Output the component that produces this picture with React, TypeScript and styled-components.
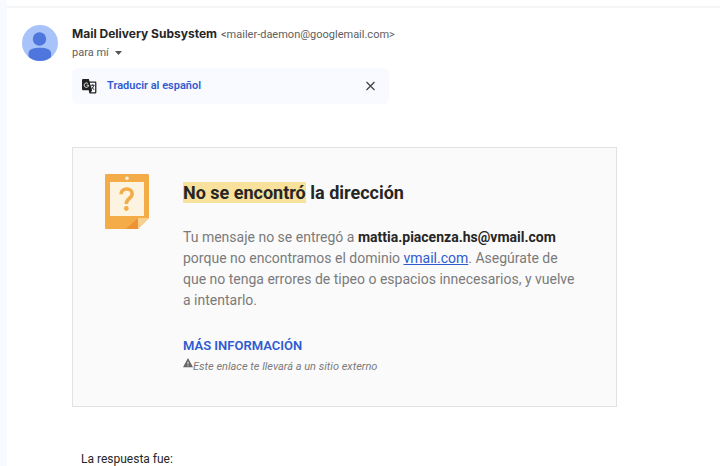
import React from "react";
import styled, { createGlobalStyle } from "styled-components";

const GlobalStyle = createGlobalStyle`
  *, *::before, *::after { box-sizing: border-box; }
  body {
    margin: 0;
    background: #fff;
    color: #262626;
    font-family: Roboto, "Liberation Sans", sans-serif;
  }
`;

const Page = styled.div`
  display: flex;
  min-height: 100vh;
  background: #f8faff;
  padding-left: 7px;
`;

const Pane = styled.main`
  flex: 1;
  min-width: 0;
  background: #fff;
  padding-top: 6px;
`;

const Message = styled.article`
  display: grid;
  grid-template-columns: 36px minmax(0, 1fr);
  column-gap: 14px;
  padding: 17px 16px 0 15px;
  border-top: 2px solid #f5f6f8;
`;

const Avatar = styled.svg`
  display: block;
  width: 36px;
  height: 36px;
`;

const Content = styled.div`
  min-width: 0;
`;

const SenderLine = styled.div`
  display: flex;
  align-items: baseline;
  gap: 4px;
  line-height: 18px;
`;

const SenderName = styled.h3`
  margin: 0;
  font-family: Inter, sans-serif;
  font-size: 12px;
  font-weight: 700;
`;

const SenderAddress = styled.span`
  color: #5e5e5e;
  font-size: 11px;
`;

const RecipientButton = styled.button`
  display: flex;
  align-items: center;
  gap: 6px;
  padding: 0;
  border: 0;
  background: none;
  color: #5e5e5e;
  font-family: inherit;
  font-size: 11px;
  line-height: 18px;
`;

const TranslateBar = styled.div`
  display: flex;
  align-items: center;
  justify-content: space-between;
  max-width: 317px;
  height: 36px;
  margin-top: 6px;
  padding: 0 13px 0 10px;
  border-radius: 6px;
  background: #f8faff;
`;

const TranslateButton = styled.button`
  display: flex;
  align-items: center;
  gap: 10px;
  padding: 0;
  border: 0;
  background: none;
  color: #2f5bd0;
  font-family: inherit;
  font-size: 11px;
  font-weight: 600;
  line-height: 16px;
`;

const CloseButton = styled.button`
  display: flex;
  padding: 0;
  border: 0;
  background: none;
  color: #444;
`;

const Notice = styled.section`
  display: flex;
  gap: 34px;
  max-width: 545px;
  margin-top: 43px;
  padding: 26px 32px 30px;
  border: 1px solid #e2e2e2;
  background: #fafafa;
`;

const NoteIcon = styled.svg`
  flex: none;
  width: 44px;
  height: 55px;
`;

const NoticeBody = styled.div`
  min-width: 0;
`;

const NoticeTitle = styled.h2`
  margin: 8px 0 24px;
  font-size: 18px;
  font-weight: 700;
  line-height: 21px;
`;

const Highlight = styled.mark`
  background: #f8e19a;
  color: inherit;
`;

const Explanation = styled.p`
  margin: 0 0 26px;
  color: #7a7a7a;
  font-size: 14px;
  line-height: 21px;

  strong { color: #262626; font-weight: 700; }
  a { color: #2f5bd0; }
`;

const MoreLink = styled.a`
  display: block;
  color: #2f5bd0;
  font-size: 13px;
  font-weight: 600;
  line-height: 18px;
  text-decoration: none;
`;

const ExternalNote = styled.small`
  display: flex;
  align-items: flex-start;
  margin-top: 3px;
  color: #7a7a7a;
  font-size: 11px;
  font-style: italic;
  line-height: 18px;
`;

const WarningIcon = styled.svg`
  flex: none;
  width: 10px;
  height: 11px;
`;

const Response = styled.p`
  margin: 44px 0 0 9px;
  font-size: 12px;
  line-height: 16px;
`;

export default function App() {
  return (
    <>
      <GlobalStyle />
      <Page>
        <Pane>
          <Message>
            <Avatar viewBox="0 0 36 36" aria-hidden="true">
              <defs>
                <clipPath id="avatar-clip"><circle cx="18" cy="18" r="18" /></clipPath>
              </defs>
              <g clipPath="url(#avatar-clip)">
                <rect width="36" height="36" fill="#a8c3fa" />
                <circle cx="17.5" cy="14" r="6.7" fill="#4f76dc" />
                <path d="M6.500 36v-7.500c0-4.200 5-5.800 11.300-5.800s11.300 1.600 11.300 5.800V36z" fill="#4f76dc" />
              </g>
            </Avatar>
            <Content>
              <SenderLine>
                <SenderName>Mail Delivery Subsystem</SenderName>
                <SenderAddress>&lt;mailer-daemon@googlemail.com&gt;</SenderAddress>
              </SenderLine>
              <RecipientButton type="button">
                para mí
                <svg width="7" height="4" viewBox="0 0 7 4" aria-hidden="true">
                  <path d="M0 0h7L3.500 4z" fill="#555" />
                </svg>
              </RecipientButton>
              <TranslateBar>
                <TranslateButton type="button">
                  <svg width="15" height="15" viewBox="0 0 24 24" aria-hidden="true">
                    <path d="M11 4h10c1.100 0 2 .9 2 2v15c0 1.100-.9 2-2 2h-9l-1-3z" fill="#222" />
                    <path d="M12 6h9v15h-7l2-2.500z" fill="#f8faff" />
                    <path d="M2 0h9l4.500 18H2c-1.100 0-2-.9-2-2V2c0-1.100.9-2 2-2zM11 18h5l-3 4z" fill="#222" />
                    <path d="M9.500 7.300A3.600 3.600 0 1 0 10.600 10H7.300" fill="none" stroke="#f8faff" strokeWidth="1.400" />
                    <path d="M14 10h6M17 8.500v1.500M19 10c-.6 2.500-2 4.500-4 6M15.500 12.500l4 5" fill="none" stroke="#222" strokeWidth="1.500" />
                  </svg>
                  Traducir al español
                </TranslateButton>
                <CloseButton type="button" aria-label="Cerrar">
                  <svg width="11" height="10" viewBox="0 0 11 10" aria-hidden="true">
                    <path d="M1.500 1l8 8M9.500 1l-8 8" stroke="currentColor" strokeWidth="1.300" />
                  </svg>
                </CloseButton>
              </TranslateBar>
              <Notice>
                <NoteIcon viewBox="0 0 44 55" aria-hidden="true">
                  <path d="M1 0h42a1 1 0 0 1 1 1v43L33 55H1a1 1 0 0 1-1-1V1a1 1 0 0 1 1-1z" fill="#f3ac48" />
                  <rect x="5" y="8" width="34" height="34" fill="#fdf3e1" />
                  <circle cx="22" cy="4.200" r="1.800" fill="#fdf3e1" />
                  <path d="M33 44v11H21z" fill="#ee9235" />
                  <path d="M33 44h11L33 55z" fill="#f8d08e" />
                  <path d="M16 20.300c0-3.300 2.500-5.300 5.700-5.300s5.500 1.900 5.500 5c0 4.100-5.900 4.500-5.900 10" fill="none" stroke="#f3ac48" strokeWidth="3.600" />
                  <circle cx="21.300" cy="34.500" r="2.400" fill="#f3ac48" />
                </NoteIcon>
                <NoticeBody>
                  <NoticeTitle><Highlight>No se encontró</Highlight> la dirección</NoticeTitle>
                  <Explanation>
                    Tu mensaje no se entregó a <strong>mattia.piacenza.hs@vmail.com</strong>{" "}
                    porque no encontramos el dominio <a href="#vmail">vmail.com</a>. Asegúrate de
                    <br />
                    que no tenga errores de tipeo o espacios innecesarios, y vuelve a intentarlo.
                  </Explanation>
                  <MoreLink href="#mas-informacion">MÁS INFORMACIÓN</MoreLink>
                  <ExternalNote>
                    <WarningIcon viewBox="0 0 11 12" aria-hidden="true">
                      <path d="M5.500 0L11 10H0z" fill="#666" />
                      <path d="M5.500 4v3M5.500 8v1" stroke="#fafafa" strokeWidth="1" />
                    </WarningIcon>
                    Este enlace te llevará a un sitio externo
                  </ExternalNote>
                </NoticeBody>
              </Notice>
              <Response>La respuesta fue:</Response>
            </Content>
          </Message>
        </Pane>
      </Page>
    </>
  );
}
